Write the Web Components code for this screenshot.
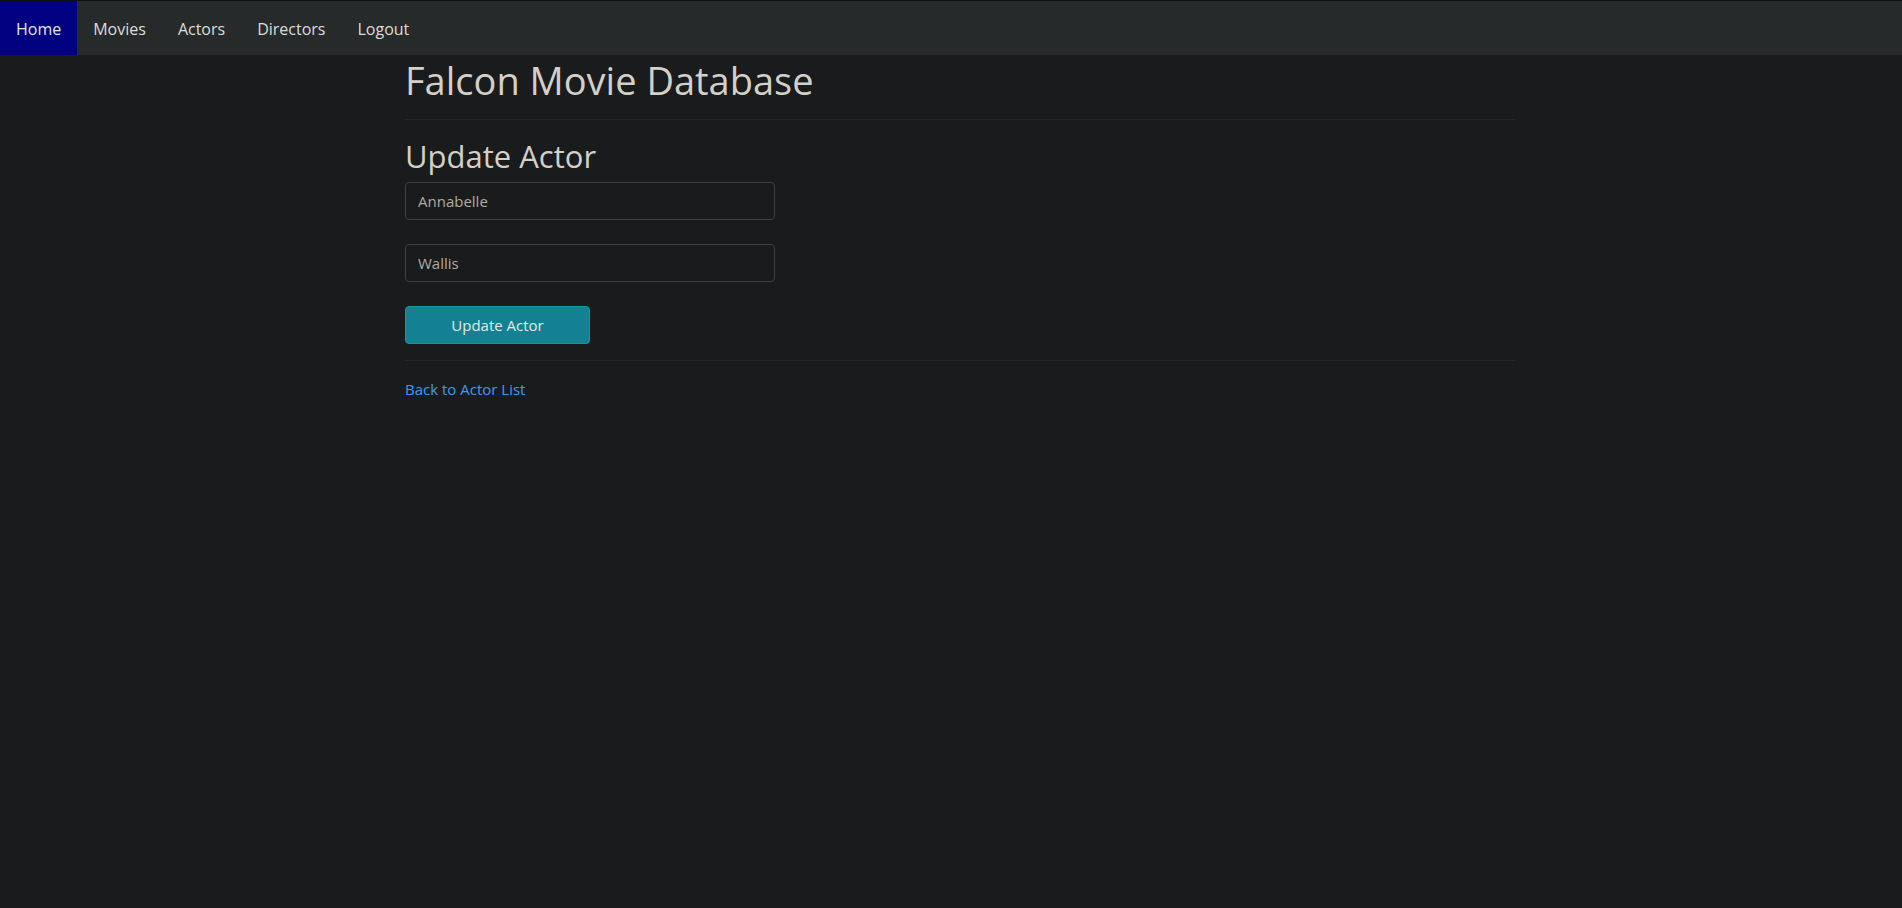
<!DOCTYPE html>
<html lang="en">
<head>
<meta charset="utf-8">
<title>Falcon Movie Database</title>
<style>
body { margin: 0; background: #1a1b1c; color: #d3cfc9; font: 15px/24px "Open Sans", "Noto Sans", sans-serif; }
</style>
</head>
<body>
<movie-app></movie-app>

<template id="nav-link-template">
<style>
:host { display: block; }
a { display: block; padding: 14px 16px 12px; font-size: 16px; line-height: 28px; color: #dfdcd8; text-decoration: none; }
:host([active]) a { background: #000080; color: #e8e6e3; }
</style>
<a><slot></slot></a>
</template>

<template id="nav-bar-template">
<style>
:host { display: block; border-top: 1px solid #0e0f10; background: #262a2b; }
nav { display: flex; }
</style>
<nav><slot></slot></nav>
</template>

<template id="text-field-template">
<style>
:host { display: block; width: 370px; max-width: 100%; }
input { display: block; box-sizing: border-box; width: 100%; height: 38px; padding: 6px 12px; border: 1px solid #3d4144; border-radius: 4px; background: #1a1b1c; color: #b0aba2; font: inherit; outline: none; }
</style>
<input type="text">
</template>

<template id="submit-button-template">
<style>
:host { display: block; width: 185px; }
button { display: block; width: 100%; height: 38px; padding: 6px 12px; border: 1px solid #1696a8; border-radius: 4px; background: #138192; color: #e8e6e3; font: inherit; cursor: pointer; }
</style>
<button type="submit"><slot></slot></button>
</template>

<template id="movie-app-template">
<style>
:host { display: block; }
main { box-sizing: border-box; width: 1110px; max-width: 100%; margin: 0 auto; }
.page { padding-left: 18px; }
h1, h2 { margin: 0; font-weight: 400; }
h1 { font-size: 38px; line-height: 50px; }
h2 { font-size: 31px; line-height: 40px; margin-bottom: 6px; }
hr { height: 1px; margin: 14px 0 16px; border: 0; background: #252728; }
form { display: grid; gap: 24px; margin-bottom: 16px; }
a { color: #3a9bf7; text-decoration: none; }
</style>
<nav-bar>
<nav-link href="#home" active>Home</nav-link>
<nav-link href="#movies">Movies</nav-link>
<nav-link href="#actors">Actors</nav-link>
<nav-link href="#directors">Directors</nav-link>
<nav-link href="#logout">Logout</nav-link>
</nav-bar>
<div class="page">
<main>
<h1>Falcon Movie Database</h1>
<hr>
<h2>Update Actor</h2>
<form>
<text-field label="First name" value="Annabelle"></text-field>
<text-field label="Last name" value="Wallis"></text-field>
<submit-button>Update Actor</submit-button>
</form>
<hr>
<a href="#actors">Back to Actor List</a>
</main>
</div>
</template>

<script>
class TemplateElement extends HTMLElement {
  constructor() {
    super();
    const template = document.getElementById(this.localName + '-template');
    this.attachShadow({ mode: 'open' }).append(template.content.cloneNode(true));
  }
}
class NavLink extends TemplateElement {
  connectedCallback() {
    this.shadowRoot.querySelector('a').href = this.getAttribute('href');
  }
}
class TextField extends TemplateElement {
  connectedCallback() {
    const input = this.shadowRoot.querySelector('input');
    input.value = this.getAttribute('value');
    input.setAttribute('aria-label', this.getAttribute('label'));
  }
}
customElements.define('nav-link', NavLink);
customElements.define('nav-bar', class extends TemplateElement {});
customElements.define('text-field', TextField);
customElements.define('submit-button', class extends TemplateElement {});
customElements.define('movie-app', class extends TemplateElement {});
</script>
</body>
</html>
